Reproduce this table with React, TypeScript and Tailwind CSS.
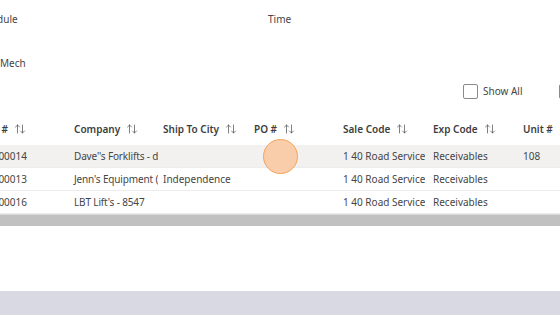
import React from 'react';
import { ArrowUpDown } from 'lucide-react';

const cols = [
  { label: 'Invoice #', w: 'w-[90px]' },
  { label: 'Company', w: 'w-[89px]' },
  { label: 'Ship To City', w: 'w-[91px]' },
  { label: 'PO #', w: 'w-[89px]' },
  { label: 'Sale Code', w: 'w-[90px]' },
  { label: 'Exp Code', w: 'w-[90px]' },
  { label: 'Unit #', w: 'w-[90px]' },
];

// body cells: company text runs a little under the next column, as in the grid
const cellCls = [
  'w-[90px] flex justify-end pr-[39px]',
  'w-[92px] pl-[8px] tracking-[-0.15px]',
  'w-[88px] pl-[5px]',
  'w-[89px] pl-[8px]',
  'w-[90px] pl-[8px]',
  'w-[90px] pl-[8px]',
  'w-[90px] pl-[8px]',
];

const rows = [
  ['INV-1000014', "Dave''s Forklifts - dallas", '', '', '1 40 Road Service', 'Receivables', '108'],
  ['INV-1000013', "Jenn's Equipment (KC)", 'Independence', '', '1 40 Road Service', 'Receivables', ''],
  ['INV-1000016', "LBT Lift's - 8547", '', '', '1 40 Road Service', 'Receivables', ''],
];

export default function App() {
  return (
    <div className="relative w-[560px] h-[315px] overflow-hidden bg-white text-[10px] text-[#454545] font-['Noto_Sans',sans-serif]">
      {/* Filter labels */}
      <div className="flex h-[38px] items-center whitespace-nowrap">
        <span className="w-[268px] shrink-0 overflow-hidden">
          <span className="-ml-[25px]">Schedule</span>
        </span>
        <span>Time</span>
      </div>
      <div className="h-[50px] pt-[18px]">Mech</div>

      {/* Show all toggle */}
      <div className="flex items-center h-[16px] -mt-[5px] pl-[463px] whitespace-nowrap">
        <span className="w-[15px] h-[15px] shrink-0 rounded-[2px] border border-[#8a8a8a] bg-white" />
        <span className="ml-[5px] w-[76px] shrink-0">Show All</span>
        <span className="w-[15px] h-[15px] shrink-0 rounded-[2px] border border-[#8a8a8a] bg-white" />
      </div>

      {/* Table, scrolled horizontally */}
      <div className="mt-[18px] overflow-hidden">
        <div className="-ml-[24px] w-[700px]">
          <div className="flex h-[28px] pb-[4px] items-center font-semibold text-[#3d3d3d]">
            {cols.map((c, j) => (
              <div
                key={c.label}
                className={`${c.w} shrink-0 flex items-center gap-[6px] overflow-hidden ${j === 0 ? 'justify-end pr-[40px]' : 'pl-[8px]'}`}
              >
                <span className="whitespace-nowrap">{c.label}</span>
                <ArrowUpDown size={12} strokeWidth={1.5} className="text-[#555] shrink-0" />
              </div>
            ))}
          </div>
          {rows.map((r, i) => (
            <div
              key={i}
              className={`flex h-[23px] items-center border-b border-[#ececec] ${i === 0 ? 'bg-[#f2f1f0]' : 'bg-white'}`}
            >
              {r.map((v, j) => (
                <div key={j} className={`${cellCls[j]} shrink-0 overflow-hidden whitespace-nowrap`}>
                  <span className="shrink-0">{v}</span>
                </div>
              ))}
            </div>
          ))}
        </div>
        {/* horizontal scrollbar */}
        <div className="h-[12px] bg-[#c1c1c1] border-t border-[#dadada]" />
      </div>

      {/* bottom band */}
      <div className="absolute left-0 right-0 bottom-0 h-[24px] bg-[#d9d9e3]" />

      {/* click indicator */}
      <div className="absolute left-[263px] top-[139px] w-[35px] h-[35px] rounded-full bg-[#f9c9a1]/90 border border-[#f5a35a]" />
    </div>
  );
}
